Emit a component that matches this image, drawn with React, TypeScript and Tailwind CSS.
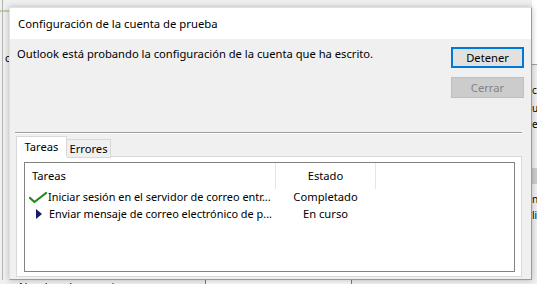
import React from "react";

const font = { fontFamily: '"Noto Sans", "Open Sans", sans-serif' };

function CheckIcon() {
  return (
    <svg width="18" height="11" viewBox="0 0 18 11" className="shrink-0">
      <path d="M1 6 L5.5 10 L17 1" fill="none" stroke="#1e8a1e" strokeWidth="2.2" strokeLinecap="round" strokeLinejoin="round" />
    </svg>
  );
}

function RunIcon() {
  return (
    <svg width="6" height="10" viewBox="0 0 6 10" className="shrink-0">
      <polygon points="0,0 6,5 0,10" fill="#141c6e" />
    </svg>
  );
}

function BackgroundWindow() {
  return (
    <>
      {/* left edge of the window behind */}
      <div className="absolute left-0 top-0 h-full w-[9px] overflow-hidden bg-[#f0f0f0]">
        <div className="absolute left-0 top-[10px] h-[2px] w-[9px] bg-[#b9d3a5]" />
        <div className="absolute left-[2px] top-0 h-full w-px bg-[#b4b4b4]" />
        <div className="absolute left-[5px] top-[52px] text-[11px] leading-[12px]">c</div>
      </div>
      {/* right edge */}
      <div className="absolute right-0 top-0 h-full w-[5px] overflow-hidden bg-[#f0f0f0] text-[10px] leading-[10px]">
        <div className="h-[65px] border-b border-[#a0a0a0] bg-white" />
        <div className="absolute left-0 top-[85px]">ca</div>
        <div className="absolute left-0 top-[103px]">u</div>
        <div className="absolute left-0 top-[119px]">e</div>
        <div className="absolute left-0 top-[168px] h-[16px] w-full bg-[#cdcdcd]" />
        <div className="absolute left-0 top-[194px]">n</div>
        <div className="absolute left-0 top-[210px]">li</div>
      </div>
      {/* bottom edge */}
      <div className="absolute bottom-0 left-0 flex h-[4px] w-full overflow-hidden bg-[#f0f0f0]">
        <div className="w-[205px] shrink-0 pl-[19px] text-[11.2px] leading-[14px]">Nombre de usuario:</div>
        <div className="w-[147px] shrink-0 border-x border-[#7a7a7a] bg-[#f6f9fc]" />
      </div>
    </>
  );
}

export default function App() {
  return (
    <div className="relative h-[284px] w-[537px] overflow-hidden bg-[#f0f0f0] text-black" style={font}>
      <BackgroundWindow />

      <div className="absolute left-[9px] top-[7px] flex h-[273px] w-[523px] flex-col border border-[#6fa6d8] border-l-[#d6e4f0] border-t-[#d6e4f0] shadow-[0_0_6px_rgba(0,0,0,0.25)]">
        <div className="flex h-[31px] shrink-0 items-center bg-white pl-[8px] pt-[2px] text-[11.3px]">
          Configuración de la cuenta de prueba
        </div>

        <div className="flex flex-1 flex-col bg-[#f0f0f0] text-[11.2px]">
          <div className="flex justify-between pl-[7px] pr-[7px] pt-[8px]">
            <div className="mt-[-1px] leading-[16px]">
              Outlook está probando la configuración de la cuenta que ha escrito.
            </div>
            <div className="flex flex-col gap-[9px]">
              <button className="h-[21px] w-[73px] border-2 border-[#0078d7] bg-[#e1e1e1] leading-none">
                Detener
              </button>
              <button className="h-[21px] w-[73px] border border-[#bfbfbf] bg-[#cccccc] leading-none text-[#838383]">
                Cerrar
              </button>
            </div>
          </div>

          <div className="ml-[5px] mr-[9px] mt-[34px] border-b border-t border-b-white border-t-[#a0a0a0]" />

          <div className="ml-[6px] mr-[9px] mt-[2px] flex flex-1 flex-col pb-[2px]">
            <div className="relative z-10 flex items-end">
              <div className="flex h-[21px] w-[51px] items-center justify-center border border-b-0 border-[#d9d9d9] bg-white">
                Tareas
              </div>
              <div className="mb-[-1px] flex h-[19px] w-[44px] items-center justify-center border border-l-0 border-[#d9d9d9] bg-[#f0f0f0] pt-[2px]">
                Errores
              </div>
            </div>
            <div className="-mt-px flex flex-1 flex-col border border-[#d9d9d9] bg-white pb-[4px] pl-[7px] pr-[6px] pt-[5px]">
              <div className="flex flex-1 flex-col border border-[#828282] bg-white">
                <div className="flex h-[26px] items-center">
                  <div className="w-[250px] pl-[7px]">Tareas</div>
                  <div className="flex h-full w-[101px] items-center justify-center border-x border-[#e5e5e5]">
                    Estado
                  </div>
                </div>
                <div className="flex h-[17px] items-center">
                  <div className="flex w-[250px] items-center pl-[4px]">
                    <CheckIcon />
                    <span className="ml-px whitespace-nowrap text-[10.9px]">Iniciar sesión en el servidor de correo entr...</span>
                  </div>
                  <div className="w-[101px] text-center">Completado</div>
                </div>
                <div className="flex h-[17px] items-center">
                  <div className="flex w-[250px] items-center pl-[11px]">
                    <RunIcon />
                    <span className="ml-[7px] whitespace-nowrap text-[10.9px]">Enviar mensaje de correo electrónico de p...</span>
                  </div>
                  <div className="w-[101px] text-center">En curso</div>
                </div>
              </div>
            </div>
          </div>
        </div>
      </div>
    </div>
  );
}
